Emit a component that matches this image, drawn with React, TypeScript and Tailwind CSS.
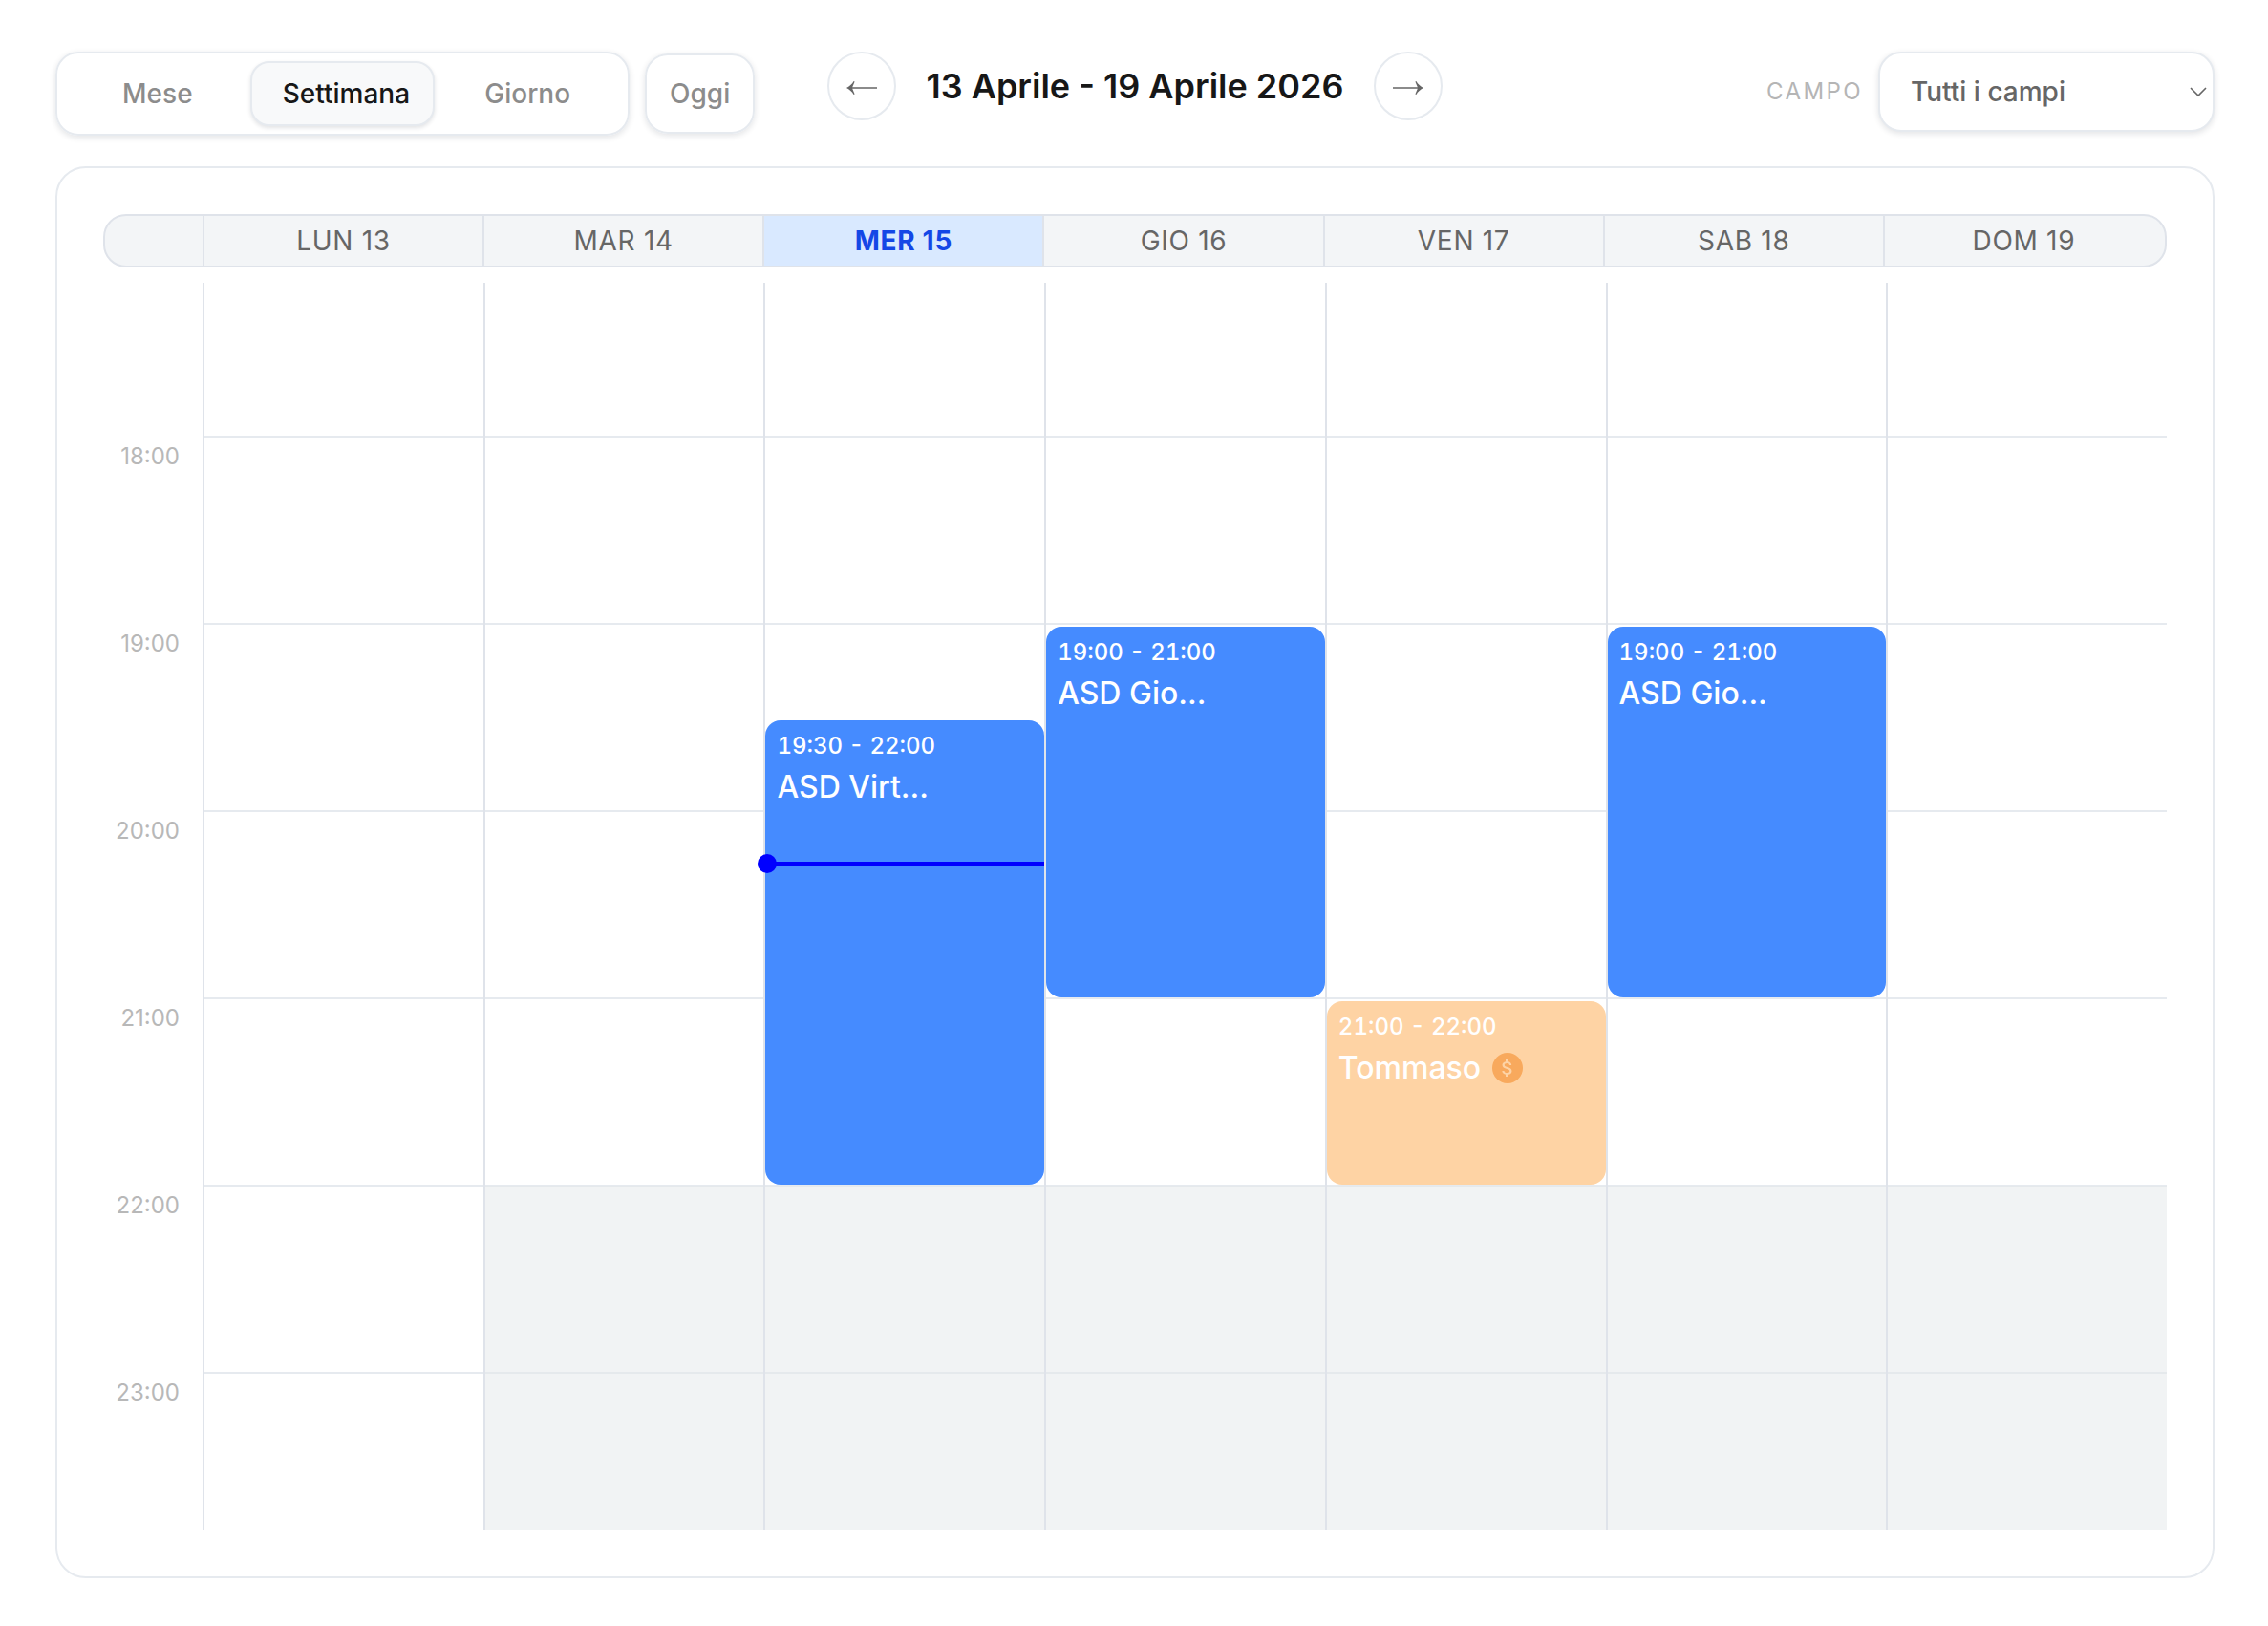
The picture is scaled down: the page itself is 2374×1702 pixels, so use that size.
import { useState } from "react";
import { MdAttachMoney } from "react-icons/md";

const HOUR_HEIGHT = 196;
const FIRST_HOUR = 18;
const FIRST_LINE = 160;
const hours = [18, 19, 20, 21, 22, 23];

type Booking = {
  start: number;
  end: number;
  time: string;
  title: string;
  pending?: boolean;
};

type Day = {
  label: string;
  today?: boolean;
  closedLate?: boolean;
  bookings: Booking[];
};

const days: Day[] = [
  { label: "LUN 13", bookings: [] },
  { label: "MAR 14", closedLate: true, bookings: [] },
  {
    label: "MER 15",
    today: true,
    closedLate: true,
    bookings: [{ start: 19.5, end: 22, time: "19:30 - 22:00", title: "ASD Virt..." }],
  },
  {
    label: "GIO 16",
    closedLate: true,
    bookings: [{ start: 19, end: 21, time: "19:00 - 21:00", title: "ASD Gio..." }],
  },
  {
    label: "VEN 17",
    closedLate: true,
    bookings: [{ start: 21, end: 22, time: "21:00 - 22:00", title: "Tommaso", pending: true }],
  },
  {
    label: "SAB 18",
    closedLate: true,
    bookings: [{ start: 19, end: 21, time: "19:00 - 21:00", title: "ASD Gio..." }],
  },
  { label: "DOM 19", closedLate: true, bookings: [] },
];

const views = ["Mese", "Settimana", "Giorno"];

function hourToY(hour: number) {
  return FIRST_LINE + (hour - FIRST_HOUR) * HOUR_HEIGHT;
}

export default function App() {
  return (
    <main className="min-h-screen bg-white pt-[54px] pr-14 pb-[50px] pl-[58px] font-['Inter',sans-serif] text-[28px] leading-10">
      <Toolbar />
      <WeekCalendar />
    </main>
  );
}

function Toolbar() {
  const [view, setView] = useState("Settimana");

  return (
    <header className="grid h-[120px] grid-cols-[1fr_auto_1fr] items-start">
      <div className="flex items-center gap-4">
        <div className="grid w-[601px] grid-cols-3 rounded-3xl border-2 border-[#e6eaef] p-2 shadow-[0_2px_6px_rgba(15,23,42,0.12)]">
          {views.map((item) => (
            <button
              key={item}
              type="button"
              onClick={() => setView(item)}
              className={
                item === view
                  ? "h-[68px] min-w-0 rounded-[20px] border-2 border-[#e6eaef] bg-[#f8f9fa] px-8 font-medium whitespace-nowrap text-[#171717] shadow-[0_2px_4px_rgba(15,23,42,0.12)]"
                  : "h-[68px] min-w-0 rounded-[20px] border-2 border-transparent px-8 font-medium text-[#8c8c8c]"
              }
            >
              {item}
            </button>
          ))}
        </div>
        <button
          type="button"
          className="h-[84px] rounded-3xl border-2 border-[#e6eaef] px-6 font-medium text-[#8c8c8c] shadow-[0_2px_6px_rgba(15,23,42,0.12)]"
        >
          Oggi
        </button>
      </div>

      <div className="flex items-center gap-8">
        <NavButton label="Settimana precedente" direction="left" />
        <h1 className="text-[36px] font-semibold text-[#171717]">13 Aprile - 19 Aprile 2026</h1>
        <NavButton label="Settimana successiva" direction="right" />
      </div>

      <div className="flex items-center justify-end gap-4">
        <label htmlFor="campo" className="text-2xl tracking-widest text-[#b5b5b5]">
          CAMPO
        </label>
        <div className="relative w-[352px]">
          <select
            id="campo"
            defaultValue="all"
            className="h-[84px] w-full appearance-none rounded-3xl border-2 border-[#e6eaef] bg-white px-8 font-medium text-[#666] shadow-[0_2px_6px_rgba(15,23,42,0.12)]"
          >
            <option value="all">Tutti i campi</option>
          </select>
          <svg
            viewBox="0 0 20 12"
            className="pointer-events-none absolute top-9 right-[7px] h-3 w-5"
            fill="none"
            stroke="#666"
            strokeWidth="1.6"
            aria-hidden="true"
          >
            <path d="M2 2 L10 10 L18 2" />
          </svg>
        </div>
      </div>
    </header>
  );
}

function NavButton({ label, direction }: { label: string; direction: "left" | "right" }) {
  return (
    <button
      type="button"
      aria-label={label}
      className="flex size-[72px] items-center justify-center rounded-full border-2 border-[#e6eaef] pt-1"
    >
      <svg viewBox="0 0 32 14" className="h-[14px] w-8" fill="#666" aria-hidden="true">
        {direction === "left" ? (
          <path d="M0 7 C3 5.600 6 3 7.600 0 L8.600 .6 L6.200 6.200 H32 V7.800 H6.200 L8.600 13.400 L7.600 14 C6 11 3 8.400 0 7 Z" />
        ) : (
          <path d="M32 7 C29 5.600 26 3 24.400 0 L23.400 .6 L25.800 6.200 H0 V7.800 H25.800 L23.400 13.400 L24.400 14 C26 11 29 8.400 32 7 Z" />
        )}
      </svg>
    </button>
  );
}

function WeekCalendar() {
  return (
    <section className="rounded-[32px] border-2 border-[#e6eaef] p-12">
      {/* Day names */}
      <div className="grid h-14 grid-cols-[102px_repeat(7,1fr)] overflow-hidden rounded-3xl border-2 border-[#dfe3ea] bg-[#f3f5f7] pr-0.5">
        <div />
        {days.map((day) => (
          <div
            key={day.label}
            className={
              day.today
                ? "flex items-center justify-center border-l-2 border-[#dfe3ea] bg-[#d9e9ff] font-bold tracking-wide text-[#1447e6]"
                : "flex items-center justify-center border-l-2 border-[#dfe3ea] tracking-wide text-[#666]"
            }
          >
            {day.label}
          </div>
        ))}
      </div>

      {/* Hours and day columns */}
      <div className="mt-4 grid h-[1306px] grid-cols-[104px_repeat(7,1fr)] overflow-hidden">
        <div className="pt-40">
          {hours.map((hour) => (
            <div
              key={hour}
              className="h-[196px] pt-2.5 pr-6 text-right text-2xl leading-6 text-[#b8b8b8] last:h-[166px]"
            >
              {hour}:00
            </div>
          ))}
        </div>
        {days.map((day) => (
          <DayColumn key={day.label} day={day} />
        ))}
      </div>
    </section>
  );
}

function DayColumn({ day }: { day: Day }) {
  return (
    <div className="relative h-[1306px] border-l-2 border-[#dfe3ea] pt-40">
      {hours.map((hour) => (
        <div key={hour} className="h-[196px] border-t-2 border-[#e6eaef]" />
      ))}

      {/* Out of opening hours */}
      {day.closedLate && <div className="absolute inset-x-0 top-[945px] bottom-0 bg-[#e4e7ea]/50" />}

      {day.bookings.map((booking) => (
        <BookingCard key={booking.time} booking={booking} />
      ))}

      {day.today && (
        <div className="absolute inset-x-0 top-[606px] h-1 bg-[#0000ff]">
          <span className="absolute -top-2 -left-2 size-5 rounded-full bg-[#0000ff]" />
        </div>
      )}
    </div>
  );
}

function BookingCard({ booking }: { booking: Booking }) {
  return (
    <article
      className={
        booking.pending
          ? "absolute inset-x-0 rounded-2xl bg-[#fed3a4] px-3 pt-3 text-white"
          : "absolute inset-x-0 rounded-2xl bg-[#4189ff]/98 px-3 pt-3 text-white"
      }
      style={{
        top: hourToY(booking.start) + 4,
        height: (booking.end - booking.start) * HOUR_HEIGHT - 4,
      }}
    >
      <p className="text-2xl leading-[30px] font-medium tabular-nums">{booking.time}</p>
      <div className="mt-2 flex items-center gap-3">
        <h2 className="text-[32px] leading-10 font-medium">{booking.title}</h2>
        {booking.pending && (
          <span className="flex size-8 items-center justify-center rounded-full bg-[#f8a95d] text-[#fdd3a6]">
            <MdAttachMoney className="size-6" aria-hidden="true" />
          </span>
        )}
      </div>
    </article>
  );
}
